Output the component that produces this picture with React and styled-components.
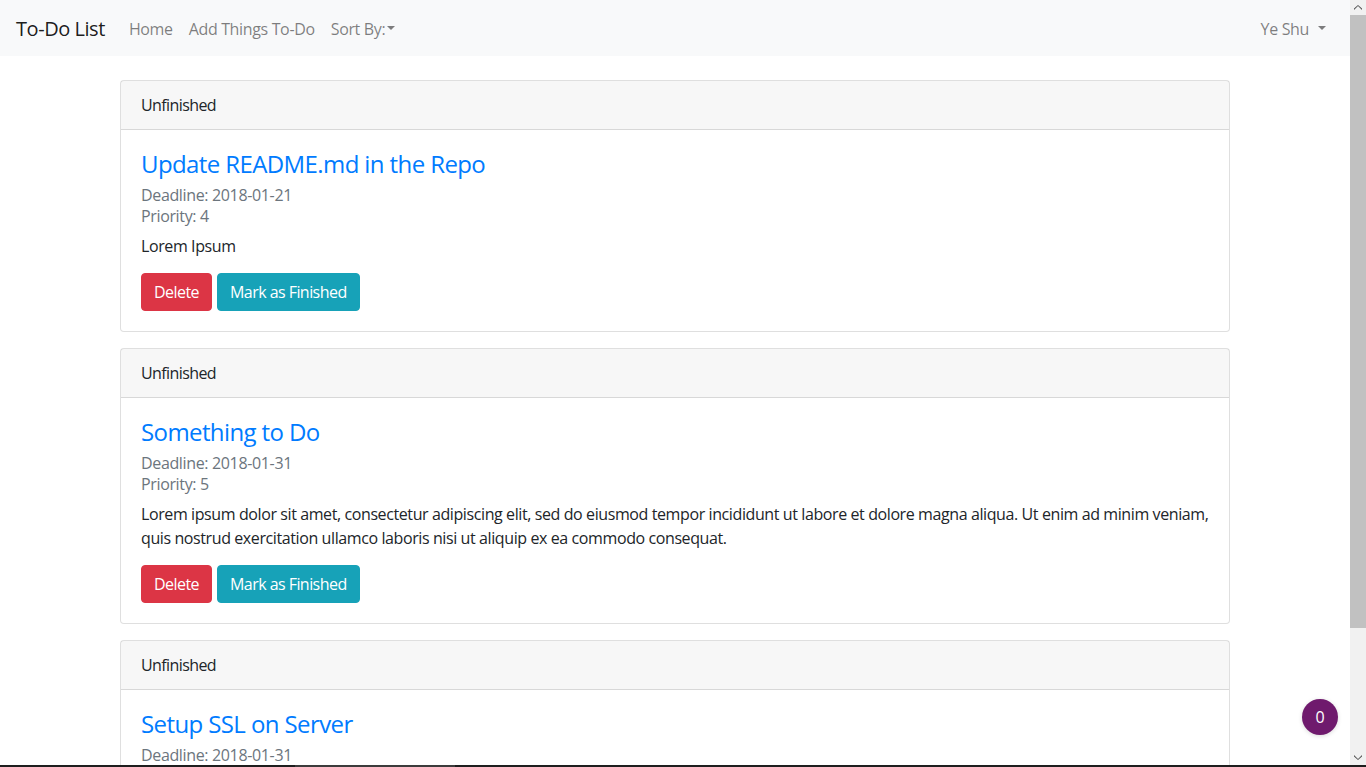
import React from "react";
import styled, { createGlobalStyle } from "styled-components";

const GlobalStyle = createGlobalStyle`
  html, body {
    margin: 0;
    height: 100%;
    overflow: hidden;
  }
  body {
    font-family: "Open Sans", "Noto Sans", sans-serif;
    font-size: 16px;
    line-height: 1.5;
    color: #212529;
    background: #fff;
  }
  * {
    box-sizing: border-box;
  }
`;

const Screen = styled.div`
  height: 100vh;
  display: flex;
  flex-direction: column;
`;

const Frame = styled.div`
  flex: 1;
  min-height: 0;
  display: flex;
`;

const Page = styled.div`
  position: relative;
  flex: 1;
  overflow: hidden;
`;

const Navbar = styled.nav`
  display: flex;
  align-items: center;
  height: 56px;
  padding: 2px 16px 0;
  background: #f8f9fa;
`;

const Brand = styled.a`
  font-size: 20px;
  color: rgba(0, 0, 0, 0.9);
  margin-right: 16px;
  letter-spacing: -0.45px;
`;

const NavList = styled.div`
  display: flex;
  align-items: center;
  flex: 1;
`;

const NavLink = styled.a`
  padding: 8px;
  font-size: 16px;
  letter-spacing: -0.35px;
  color: rgba(0, 0, 0, 0.5);
  display: flex;
  align-items: center;
  margin-left: ${(p) => (p.$right ? "auto" : "0")};
  &::after {
    content: ${(p) => (p.$caret ? '""' : "none")};
    margin-left: ${(p) => p.$caretGap || "4px"};
    border-top: 4.8px solid rgba(0, 0, 0, 0.5);
    border-left: 4.2px solid transparent;
    border-right: 4.2px solid transparent;
    margin-top: -2px;
  }
`;

const Container = styled.main`
  width: 1110px;
  margin: 24px auto 0;
  display: flex;
  flex-direction: column;
  gap: 16px;
  padding-bottom: 16px;
`;

const Card = styled.section`
  border: 1px solid rgba(0, 0, 0, 0.125);
  border-radius: 4px;
  background: #fff;
`;

const CardHeader = styled.div`
  padding: 12px 20px;
  background: rgba(0, 0, 0, 0.03);
  border-bottom: 1px solid rgba(0, 0, 0, 0.125);
  font-size: 16px;
  line-height: 24px;
  letter-spacing: -0.6px;
`;

const CardBody = styled.div`
  padding: 20px;
`;

const Title = styled.h4`
  margin: 0 0 6px;
  font-size: 24px;
  font-weight: 400;
  line-height: 1.2;
  letter-spacing: -0.6px;
  color: #007bff;
`;

const Meta = styled.div`
  color: #6c757d;
  font-size: 16px;
  line-height: 21px;
  letter-spacing: -0.35px;
  margin-bottom: ${(p) => (p.$last ? "8px" : "0")};
`;

const Text = styled.p`
  margin: 0 0 15px;
  font-size: 16px;
  line-height: 23.5px;
  letter-spacing: -0.4px;
`;

const Actions = styled.div`
  display: flex;
  gap: 5px;
`;

const Button = styled.button`
  font-family: inherit;
  font-size: 16px;
  letter-spacing: -0.55px;
  line-height: 24px;
  height: 38px;
  padding: 6px 12px;
  border: 1px solid ${(p) => p.$bg};
  border-radius: 4px;
  color: #fff;
  background: ${(p) => p.$bg};
  cursor: pointer;
`;

const Counter = styled.div`
  position: absolute;
  right: 12px;
  bottom: 30px;
  width: 36px;
  height: 36px;
  border-radius: 50%;
  background: #6f1a6d;
  color: #fff;
  display: flex;
  align-items: center;
  justify-content: center;
  font-size: 16px;
  box-shadow: 0 1px 4px rgba(0, 0, 0, 0.15);
`;

const Scrollbar = styled.div`
  width: 16px;
  display: flex;
  flex-direction: column;
  background: #f1f1f1;
`;

const ScrollArrow = styled.div`
  height: 15px;
  display: flex;
  align-items: center;
  justify-content: center;
`;

const Track = styled.div`
  flex: 1;
`;

const Thumb = styled.div`
  height: 613px;
  background: #c1c1c1;
`;

const Taskbar = styled.div`
  height: 2px;
  background: linear-gradient(
    to right,
    #1e1e1e 0,
    #1e1e1e 295px,
    #3c3c3c 295px,
    #3c3c3c 455px,
    #1e1e1e 455px
  );
`;

const Chevron = ({ down }) => (
  <svg width="8" height="5" viewBox="0 0 8 5">
    <path
      d={down ? "M0 0 L4 4 L8 0 L8 1.5 L4 5 L0 1.5 Z" : "M0 5 L4 1 L8 5 L8 3.5 L4 0 L0 3.5 Z"}
      fill="#505050"
    />
  </svg>
);

const todos = [
  {
    title: "Update README.md in the Repo",
    deadline: "2018-01-21",
    priority: 4,
    text: "Lorem Ipsum",
  },
  {
    title: "Something to Do",
    deadline: "2018-01-31",
    priority: 5,
    text:
      "Lorem ipsum dolor sit amet, consectetur adipiscing elit, sed do eiusmod tempor incididunt ut labore et dolore magna aliqua. Ut enim ad minim veniam, quis nostrud exercitation ullamco laboris nisi ut aliquip ex ea commodo consequat.",
  },
  {
    title: "Setup SSL on Server",
    deadline: "2018-01-31",
    priority: 3,
    text: "Lorem Ipsum",
  },
];

export default function App() {
  return (
    <Screen>
      <GlobalStyle />
      <Frame>
        <Page>
          <Navbar>
            <Brand>To-Do List</Brand>
            <NavList>
              <NavLink>Home</NavLink>
              <NavLink>Add Things To-Do</NavLink>
              <NavLink $caret $caretGap="2px">
                Sort By:
              </NavLink>
              <NavLink $caret $caretGap="9px" $right>
                Ye Shu
              </NavLink>
            </NavList>
          </Navbar>
          <Container>
            {todos.map((t) => (
              <Card key={t.title}>
                <CardHeader>Unfinished</CardHeader>
                <CardBody>
                  <Title>{t.title}</Title>
                  <Meta>Deadline: {t.deadline}</Meta>
                  <Meta $last>Priority: {t.priority}</Meta>
                  <Text>{t.text}</Text>
                  <Actions>
                    <Button $bg="#dc3545">Delete</Button>
                    <Button $bg="#17a2b8">Mark as Finished</Button>
                  </Actions>
                </CardBody>
              </Card>
            ))}
          </Container>
          <Counter>0</Counter>
        </Page>
        <Scrollbar>
          <ScrollArrow>
            <Chevron />
          </ScrollArrow>
          <Track>
            <Thumb />
          </Track>
          <ScrollArrow>
            <Chevron down />
          </ScrollArrow>
        </Scrollbar>
      </Frame>
      <Taskbar />
    </Screen>
  );
}
